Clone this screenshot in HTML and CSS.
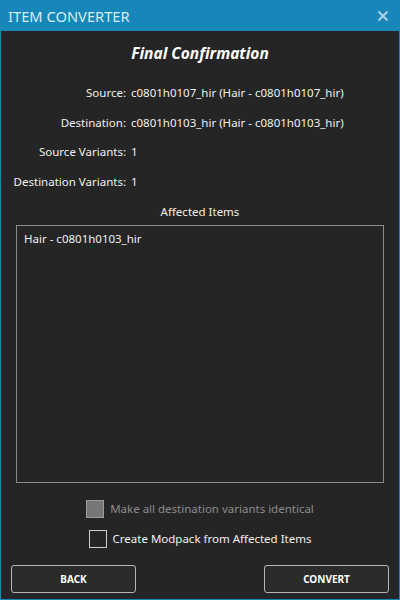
FILE: index.html
```html
<!DOCTYPE html>
<html>
<head>
<meta charset="utf-8">
<link rel="stylesheet" href="styles.css">
</head>
<body>
<div class="window">
  <div class="titlebar">
    <span class="title">ITEM CONVERTER</span>
    <svg class="close" width="12" height="12" viewBox="0 0 12 12"><path d="M1.5 1.5 L10.5 10.5 M10.5 1.5 L1.5 10.5" stroke="#a9d3e6" stroke-width="2"/></svg>
  </div>
  <div class="content">
    <h1 class="heading">Final Confirmation</h1>
    <div class="info">
      <div class="label">Source:</div><div class="value">c0801h0107_hir (Hair - c0801h0107_hir)</div>
      <div class="label">Destination:</div><div class="value">c0801h0103_hir (Hair - c0801h0103_hir)</div>
      <div class="label">Source Variants:</div><div class="value">1</div>
      <div class="label">Destination Variants:</div><div class="value">1</div>
    </div>
    <div class="affected-title">Affected Items</div>
    <div class="listbox">
      <div class="list-item">Hair - c0801h0103_hir</div>
    </div>
    <div class="checks">
      <label class="check disabled"><span class="box filled"></span>Make all destination variants identical</label>
      <label class="check"><span class="box"></span>Create Modpack from Affected Items</label>
    </div>
    <div class="buttons">
      <button class="btn">BACK</button>
      <button class="btn">CONVERT</button>
    </div>
  </div>
</div>
</body>
</html>
```
FILE: styles.css
```css
html, body {
  margin: 0;
  padding: 0;
  width: 400px;
  height: 600px;
  overflow: hidden;
  background: #252525;
}
.window {
  width: 400px;
  height: 600px;
  box-sizing: border-box;
  border: 1px solid #1786b8;
  border-top: none;
  display: flex;
  flex-direction: column;
  font-family: "Noto Sans", "Open Sans", sans-serif;
  color: #f0f0f0;
}
.titlebar {
  height: 31px;
  background: #1786b8;
  display: flex;
  align-items: center;
  justify-content: space-between;
  padding: 0 11px 0 8px;
  margin: 0 -1px;
  flex-shrink: 0;
}
.title {
  font-size: 14.7px;
  color: #d6edf7;
}
.close { display: block; }
.content {
  flex: 1;
  display: flex;
  flex-direction: column;
  background: #252525;
}
.heading {
  margin: 11px 0 0;
  text-align: center;
  font-size: 15.5px;
  font-style: italic;
  font-weight: bold;
  color: #ffffff;
  line-height: 22px;
}
.info {
  margin-top: 20px;
  display: grid;
  grid-template-columns: 125px 1fr;
  column-gap: 5px;
  row-gap: 12.5px;
  font-size: 11.5px;
  line-height: 17px;
}
.label { text-align: right; }
.value { text-align: left; }
.affected-title {
  margin-top: 13.5px;
  text-align: center;
  font-size: 11.5px;
  line-height: 17px;
}
.listbox {
  margin: 5px 15px 0 15px;
  height: 258px;
  border: 1px solid #8a8a8a;
  box-sizing: border-box;
  padding: 4px 7px;
  font-size: 11.5px;
  line-height: 18px;
}
.checks {
  margin-top: 17px;
  display: flex;
  flex-direction: column;
  align-items: center;
  gap: 12px;
  font-size: 11.5px;
}
.check {
  display: flex;
  align-items: center;
  gap: 6px;
  line-height: 18px;
  color: #f0f0f0;
}
.check.disabled { color: #8c8c8c; }
.box {
  width: 18px;
  height: 18px;
  box-sizing: border-box;
  border: 1px solid #cfcfcf;
  display: inline-block;
}
.box.filled {
  background: #777777;
  border-color: #9a9a9a;
}
.buttons {
  margin-top: 17px;
  display: flex;
  justify-content: space-between;
  padding: 0 10px;
}
.btn {
  width: 125px;
  height: 28px;
  background: #2b2b2b;
  border: 1px solid #b5b5b5;
  border-radius: 3px;
  color: #ffffff;
  font-family: "Noto Sans", sans-serif;
  font-weight: bold;
  font-size: 10px;
  padding: 0;
}
```
